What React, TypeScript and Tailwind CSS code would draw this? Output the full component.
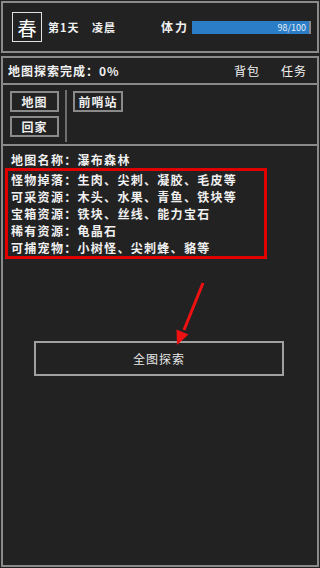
import React from "react";

const font = { fontFamily: '"Noto Sans CJK SC", "Noto Sans", sans-serif' };

const drops = [
  "怪物掉落：生肉、尖刺、凝胶、毛皮等",
  "可采资源：木头、水果、青鱼、铁块等",
  "宝箱资源：铁块、丝线、能力宝石",
  "稀有资源：龟晶石",
  "可捕宠物：小树怪、尖刺蜂、貉等",
];

const SmallButton = ({ label }: { label: string }) => (
  <div className="w-[49px] h-[21px] border-2 border-[#8a8a8a] flex items-center justify-center text-[12px] tracking-[1px] text-[#eeeeee] font-bold">
    {label}
  </div>
);

export default function App() {
  return (
    <div
      className="relative w-[320px] h-[568px] bg-[#222222] flex flex-col pt-[1px] pb-[1px] px-[1px] text-[#f0f0f0]"
      style={font}
    >
      <div className="h-[52px] shrink-0 border-2 border-[#8a8a8a] flex items-center pl-[9px] whitespace-nowrap">
        <div className="w-[30px] h-[30px] shrink-0 border border-[#e0e0e0] flex items-center justify-center text-[19px] leading-none text-white">
          春
        </div>
        <span className="ml-[6px] w-[31px] shrink-0 text-[11px] font-bold tracking-[1px]">第1天</span>
        <span className="ml-[13px] w-[24px] shrink-0 text-[11px] font-bold tracking-[1px]">凌晨</span>
        <span className="ml-[45px] w-[26px] shrink-0 text-[12px] font-bold tracking-[2px]">体力</span>
        <div className="ml-[5px] w-[119px] shrink-0 h-[13px] bg-[#2a7dc6] flex items-center justify-end">
          <span className="text-[9px] leading-none text-[#e8eef5] pr-[3px]">98/100</span>
          <div className="w-[2px] h-full bg-[#8a8a8a]" />
        </div>
      </div>

      <div className="mt-[3px] flex-1 border-2 border-[#8a8a8a] flex flex-col">
        <div className="h-[27px] border-b-2 border-[#8a8a8a] flex items-center pl-[5px] pr-[10px] text-[12px] tracking-[1px]">
          <span className="font-bold">地图探索完成：0%</span>
          <span className="ml-auto">背包</span>
          <span className="ml-[21px]">任务</span>
        </div>

        <div className="h-[61px] border-b-2 border-[#8a8a8a] flex pl-[7px] pt-[5px]">
          <div className="flex flex-col gap-[4px] pt-[1px]">
            <SmallButton label="地图" />
            <SmallButton label="回家" />
          </div>
          <div className="ml-[6px] w-[2px] h-[52px] bg-[#6e6e6e]" />
          <div className="ml-[6px] pt-[1px]">
            <div className="w-[50px] h-[21px] border-2 border-[#8a8a8a] flex items-center justify-center text-[12px] tracking-[1px] font-bold">
              前哨站
            </div>
          </div>
        </div>

        <div className="pt-[6px] text-[12px] tracking-[1.3px] font-bold">
          <div className="h-[16px] leading-[16px] pl-[8px]">地图名称：瀑布森林</div>
          <div className="ml-[2px] w-[262px] border-[3px] border-[#e00000] pl-[3px]">
            {drops.map((t) => (
              <div key={t} className="h-[17px] leading-[17px] whitespace-nowrap">
                {t}
              </div>
            ))}
          </div>
        </div>

        <div className="mt-[82px] ml-[31px] w-[250px] h-[35px] border-2 border-[#a0a0a0] flex items-center justify-center text-[12px] tracking-[1px] text-[#e8e8e8]">
          全图探索
        </div>
      </div>

      <svg className="absolute left-0 top-0 pointer-events-none" width="320" height="568">
        <line x1="203" y1="283" x2="184" y2="330" stroke="#ee1111" strokeWidth="3" />
        <polygon points="177,345 188.5,334.5 176.5,329.5" fill="#ee1111" />
      </svg>
    </div>
  );
}
